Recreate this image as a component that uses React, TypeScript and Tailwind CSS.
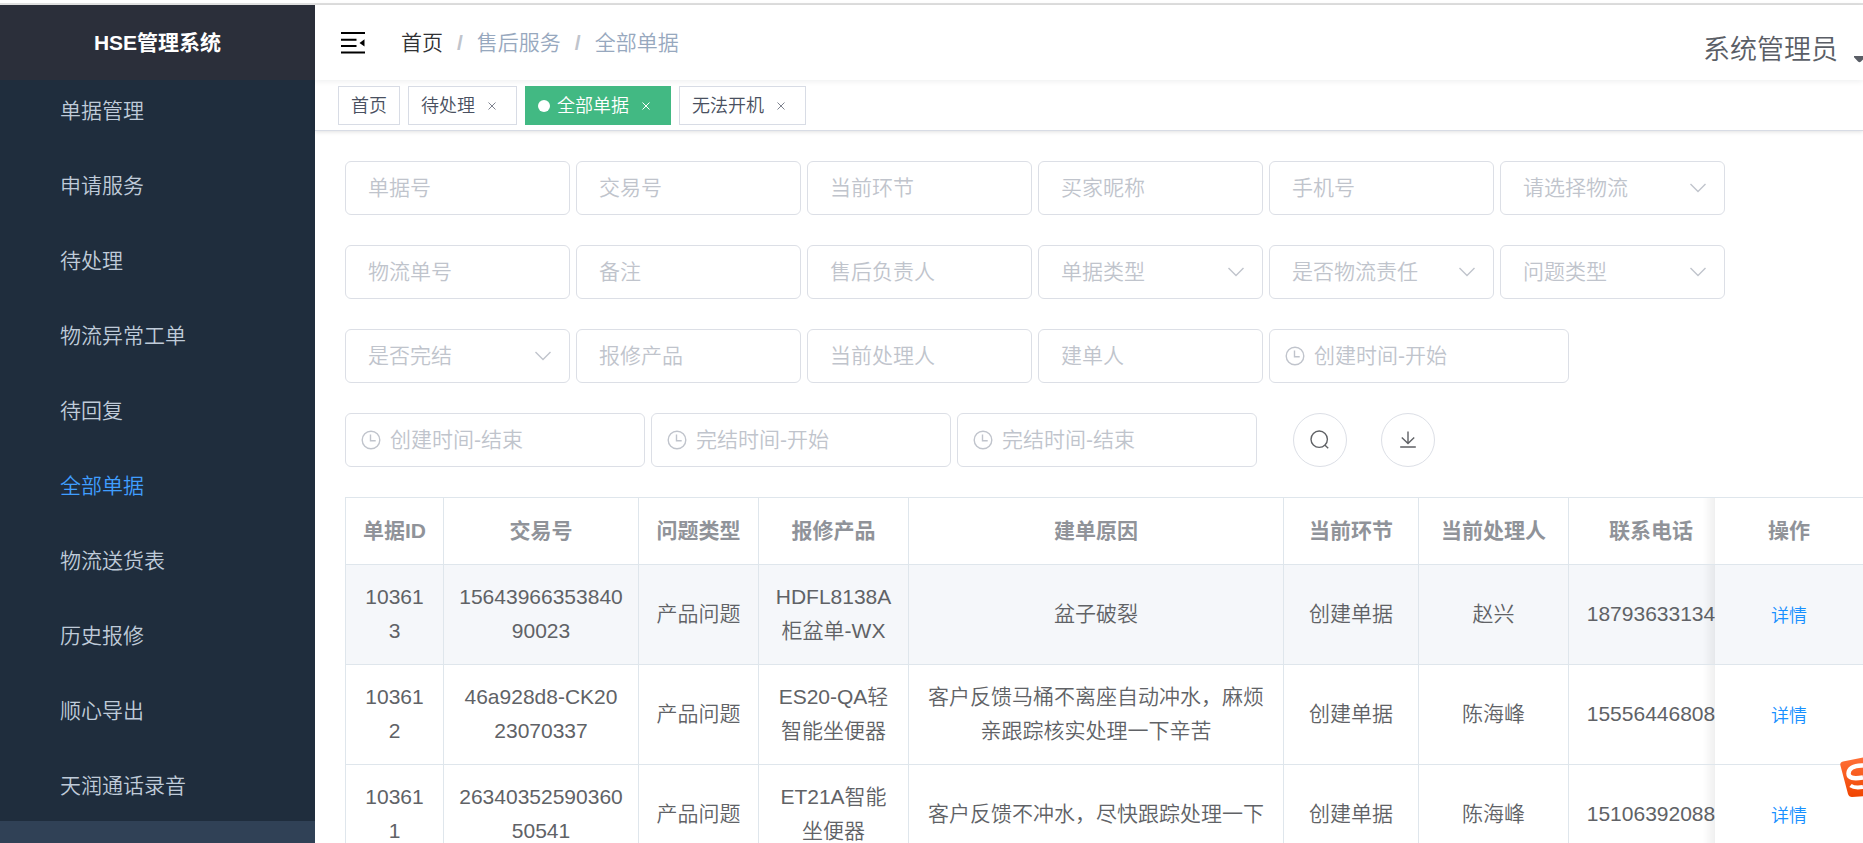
import React from 'react';
import clsx from 'clsx';

const MENU = [
  '单据管理',
  '申请服务',
  '待处理',
  '物流异常工单',
  '待回复',
  '全部单据',
  '物流送货表',
  '历史报修',
  '顺心导出',
  '天润通话录音',
];

const TAGS = [
  { title: '首页', affix: true },
  { title: '待处理' },
  { title: '全部单据', active: true },
  { title: '无法开机' },
];

type Filter = { type: 'input' | 'select' | 'date'; label: string };

const FILTERS: Filter[] = [
  { type: 'input', label: '单据号' },
  { type: 'input', label: '交易号' },
  { type: 'input', label: '当前环节' },
  { type: 'input', label: '买家昵称' },
  { type: 'input', label: '手机号' },
  { type: 'select', label: '请选择物流' },
  { type: 'input', label: '物流单号' },
  { type: 'input', label: '备注' },
  { type: 'input', label: '售后负责人' },
  { type: 'select', label: '单据类型' },
  { type: 'select', label: '是否物流责任' },
  { type: 'select', label: '问题类型' },
  { type: 'select', label: '是否完结' },
  { type: 'input', label: '报修产品' },
  { type: 'input', label: '当前处理人' },
  { type: 'input', label: '建单人' },
  { type: 'date', label: '创建时间-开始' },
  { type: 'date', label: '创建时间-结束' },
  { type: 'date', label: '完结时间-开始' },
  { type: 'date', label: '完结时间-结束' },
];

const COLUMNS = [
  { title: '单据ID', width: 'w-[98px]' },
  { title: '交易号', width: 'w-[195px]' },
  { title: '问题类型', width: 'w-[120px]' },
  { title: '报修产品', width: 'w-[150px]' },
  { title: '建单原因', width: 'w-[375px]' },
  { title: '当前环节', width: 'w-[135px]' },
  { title: '当前处理人', width: 'w-[150px]' },
  { title: '联系电话', width: 'w-[165px]' },
];

const ROWS = [
  ['103613', '1564396635384090023', '产品问题', 'HDFL8138A柜盆单-WX', '盆子破裂', '创建单据', '赵兴', '18793633134'],
  ['103612', '46a928d8-CK2023070337', '产品问题', 'ES20-QA轻智能坐便器', '客户反馈马桶不离座自动冲水，麻烦亲跟踪核实处理一下辛苦', '创建单据', '陈海峰', '15556446808'],
  ['103611', '2634035259036050541', '产品问题', 'ET21A智能坐便器', '客户反馈不冲水，尽快跟踪处理一下', '创建单据', '陈海峰', '15106392088'],
];

const fieldClass =
  'h-[54px] w-full rounded-md border border-[#dcdfe6] bg-white text-[21px] font-[350] text-[#606266] outline-none placeholder:text-[#c0c4cc] focus:border-[#409eff]';

// pinned column, with a soft shade falling to its left
const pinnedClass =
  "sticky right-0 border-b border-[#dfe6ec] before:absolute before:inset-y-0 before:-left-3 before:w-3 before:bg-linear-to-r before:from-transparent before:to-black/6 before:content-['']";

function FoldIcon() {
  return (
    <svg viewBox="0 0 24 22" className="h-[22px] w-6" fill="#000">
      <path d="M0 0h24v2H0zM0 6.800h15.500v2H0zM0 13h15.500v2H0zM0 19.600h24v2H0zM23.500 7.200v7.400L18.500 10.900z" />
    </svg>
  );
}

function ClockIcon() {
  return (
    <svg viewBox="0 0 20 20" className="pointer-events-none absolute top-[17px] left-4 size-5" fill="none" stroke="#c0c4cc" strokeWidth="1.4">
      <circle cx="10" cy="10" r="8.8" />
      <path d="M9.5 4.5v6.200h5.200" />
    </svg>
  );
}

function FilterField({ type, label }: Filter) {
  if (type === 'date') {
    return (
      <div className="relative w-[300px]">
        <input type="text" aria-label={label} placeholder={label} className={clsx(fieldClass, 'pr-4 pl-11')} />
        <ClockIcon />
      </div>
    );
  }
  if (type === 'select') {
    return (
      <div className="relative w-[225px]">
        <select aria-label={label} defaultValue="" className={clsx(fieldClass, 'appearance-none pr-11 pl-[22px] text-[#c0c4cc]!')}>
          <option value="">{label}</option>
        </select>
        <svg viewBox="0 0 18 12" className="pointer-events-none absolute top-[21px] right-[18px] h-3 w-[18px]" fill="none" stroke="#c0c4cc" strokeWidth="1.4">
          <path d="M1.500 2 9 9.600 16.500 2" />
        </svg>
      </div>
    );
  }
  return (
    <div className="w-[225px]">
      <input type="text" aria-label={label} placeholder={label} className={clsx(fieldClass, 'px-[22px]')} />
    </div>
  );
}

function Sidebar() {
  return (
    <aside className="flex w-[315px] shrink-0 flex-col overflow-hidden bg-[#304156]">
      <h1 className="z-10 flex h-[75px] shrink-0 items-center justify-center bg-[#2b2f3a] text-[21px] font-bold text-white">HSE管理系统</h1>
      {/* the menu is scrolled a little under the title */}
      <nav className="-mt-[9px] bg-[#1f2d3d]">
        {MENU.map((item) => (
          <a
            key={item}
            href="#"
            className={clsx(
              'flex h-[75px] items-center pt-1 pl-[60px] text-[21px] font-[350] hover:bg-[#001528]',
              item === '全部单据' ? 'text-[#409eff]' : 'text-[#bfcbd9]'
            )}
          >
            {item}
          </a>
        ))}
      </nav>
    </aside>
  );
}

function Header() {
  return (
    <header className="relative z-20 flex h-[75px] items-center justify-between bg-white pl-[26px] shadow-[0_1px_6px_rgba(0,21,41,0.08)]">
      <div className="flex items-center">
        <button type="button" aria-label="收起菜单">
          <FoldIcon />
        </button>
        <nav className="ml-9 flex items-center text-[21px] font-[350] text-[#97a8be]">
          <a href="#" className="text-[#303133]">首页</a>
          <span className="mx-3.5 font-bold text-[#c0c4cc]">/</span>
          <span>售后服务</span>
          <span className="mx-3.5 font-bold text-[#c0c4cc]">/</span>
          <span>全部单据</span>
        </nav>
      </div>
      <button type="button" className="flex items-end gap-4 pt-4 text-[27px] font-[350] text-[#5a5e66]">
        系统管理员
        <svg viewBox="0 0 9 7" className="mb-2 h-[7px] w-[9px]" fill="#5a5e66">
          <path d="M0 0h9v3.600L7 5.400Q5.500 7 4 5.400L0 1.200z" />
        </svg>
      </button>
    </header>
  );
}

function TagsView() {
  return (
    <div className="relative z-10 flex h-[51px] items-center gap-2 border-b border-[#d8dce5] bg-white pl-[23px] shadow-[0_1px_4px_rgba(0,0,0,0.12)]">
      {TAGS.map((tag) => (
        <div
          key={tag.title}
          className={clsx(
            'flex h-[39px] items-center border px-3 pt-0.5 text-lg font-[350]',
            tag.active ? 'border-[#42b983] bg-[#42b983] text-white' : 'border-[#d8dce5] bg-white text-[#495060]'
          )}
        >
          {tag.active && <span className="mr-[7px] size-3 rounded-full bg-white" />}
          <a href="#">{tag.title}</a>
          {!tag.affix && (
            <button type="button" aria-label="关闭" className="ml-[5px] flex size-6 items-center justify-center">
              <svg viewBox="0 0 8 8" className={clsx('size-2', !tag.active && 'opacity-70')} fill="none" stroke="currentColor" strokeWidth="1">
                <path d="M.5.5l7 7M7.500.5l-7 7" />
              </svg>
            </button>
          )}
        </div>
      ))}
    </div>
  );
}

function OrderTable() {
  return (
    <div className="mt-[30px] overflow-hidden border-t border-l border-[#dfe6ec]">
      <table className="w-[1536px] min-w-full table-fixed border-separate border-spacing-0 text-center text-[21px] leading-[34px] text-[#606266]">
        <thead className="text-[#909399]">
          <tr className="h-[67px]">
            {COLUMNS.map((col) => (
              <th key={col.title} className={clsx('border-r border-b border-[#dfe6ec] font-bold', col.width)}>{col.title}</th>
            ))}
            <th className={clsx(pinnedClass, 'w-[148px] bg-white font-bold')}>操作</th>
          </tr>
        </thead>
        <tbody className="font-[350]">
          {ROWS.map((row, i) => (
            <tr key={row[0]} className={clsx('h-[100px]', i === 0 && 'bg-[#f5f7fa]')}>
              {row.map((cell, j) => (
                <td key={j} className="border-r border-b border-[#dfe6ec] px-[15px] pb-0.5 break-all">{cell}</td>
              ))}
              <td className={clsx(pinnedClass, i === 0 ? 'bg-[#f5f7fa]' : 'bg-white')}>
                <a href="#" className="text-lg text-[#1890ff]">详情</a>
              </td>
            </tr>
          ))}
        </tbody>
      </table>
    </div>
  );
}

export default function App() {
  return (
    <div className="flex h-screen flex-col overflow-hidden bg-white pt-[3px] font-['Liberation_Sans','Noto_Sans_CJK_SC',sans-serif]">
      <div className="h-[2px] shrink-0 bg-[#e0e0e0]" />
      <div className="flex min-h-0 flex-1">
        <Sidebar />
        <div className="min-w-0 flex-1">
          <Header />
          <TagsView />
          <main className="pt-[30px] pl-[30px]">
            <form className="flex flex-wrap gap-x-[6px] gap-y-[30px] pr-[30px]">
              {FILTERS.map((f) => (
                <FilterField key={f.label} {...f} />
              ))}
              <button type="button" aria-label="搜索" className="ml-[30px] flex size-[54px] items-center justify-center rounded-full border border-[#dcdfe6]">
                <svg viewBox="0 0 20 20" className="size-5" fill="none" stroke="#606266" strokeWidth="1.4">
                  <circle cx="9.200" cy="9.200" r="8.200" />
                  <path d="M14.800 15l3.400 3.200" />
                </svg>
              </button>
              <button type="button" aria-label="下载" className="ml-7 flex size-[54px] items-center justify-center rounded-full border border-[#dcdfe6]">
                <svg viewBox="0 0 20 20" className="size-5" fill="none" stroke="#606266" strokeWidth="1.4">
                  <path d="M10 1.500v12M3.800 7.600l6.200 6 6.200-6M2.200 17h15.600" />
                </svg>
              </button>
            </form>
            <OrderTable />
          </main>
        </div>
      </div>

      {/* input method badge */}
      <svg viewBox="0 0 23 40" className="fixed right-0 bottom-[46px] z-30 h-10 w-[23px]">
        <defs>
          <linearGradient id="ime" x1="0" y1="0" x2="0" y2="1">
            <stop offset="0" stopColor="#ff7038" />
            <stop offset="1" stopColor="#f04400" />
          </linearGradient>
        </defs>
        <path d="M3 4.600 23 .4V39.200l-11 .8q-3 0-4-3L.3 8q-.3-2.800 2.700-3.400z" fill="url(#ime)" />
        <path d="M23 8.500C13 8 8.500 12 8.500 16.500S13 22 23 20.500" fill="none" stroke="#fff" strokeWidth="4.500" />
        <path d="M10.500 28.500q4 3 12.500 1.500" fill="none" stroke="#fff" strokeWidth="4" />
      </svg>
    </div>
  );
}
